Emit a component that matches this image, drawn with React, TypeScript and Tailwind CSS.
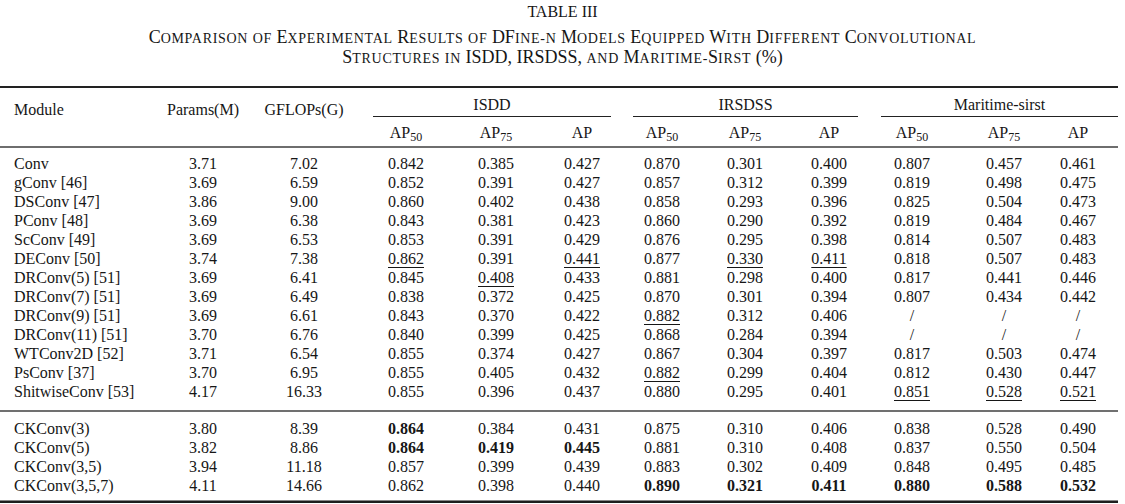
import React from "react";

type Cell = { v: string; b?: boolean; u?: boolean };

type Row = { name: string; cells: Cell[] };

const mk = (name: string, vals: string): Row => ({
  name,
  cells: vals.split(" ").map((t) => {
    if (t.startsWith("_")) return { v: t.slice(1), u: true };
    if (t.startsWith("*")) return { v: t.slice(1), b: true };
    return { v: t };
  }),
});

const baseRows: Row[] = [
  mk("Conv", "3.71 7.02 0.842 0.385 0.427 0.870 0.301 0.400 0.807 0.457 0.461"),
  mk("gConv [46]", "3.69 6.59 0.852 0.391 0.427 0.857 0.312 0.399 0.819 0.498 0.475"),
  mk("DSConv [47]", "3.86 9.00 0.860 0.402 0.438 0.858 0.293 0.396 0.825 0.504 0.473"),
  mk("PConv [48]", "3.69 6.38 0.843 0.381 0.423 0.860 0.290 0.392 0.819 0.484 0.467"),
  mk("ScConv [49]", "3.69 6.53 0.853 0.391 0.429 0.876 0.295 0.398 0.814 0.507 0.483"),
  mk("DEConv [50]", "3.74 7.38 _0.862 0.391 _0.441 0.877 _0.330 _0.411 0.818 0.507 0.483"),
  mk("DRConv(5) [51]", "3.69 6.41 0.845 _0.408 0.433 0.881 0.298 0.400 0.817 0.441 0.446"),
  mk("DRConv(7) [51]", "3.69 6.49 0.838 0.372 0.425 0.870 0.301 0.394 0.807 0.434 0.442"),
  mk("DRConv(9) [51]", "3.69 6.61 0.843 0.370 0.422 _0.882 0.312 0.406 / / /"),
  mk("DRConv(11) [51]", "3.70 6.76 0.840 0.399 0.425 0.868 0.284 0.394 / / /"),
  mk("WTConv2D [52]", "3.71 6.54 0.855 0.374 0.427 0.867 0.304 0.397 0.817 0.503 0.474"),
  mk("PsConv [37]", "3.70 6.95 0.855 0.405 0.432 _0.882 0.299 0.404 0.812 0.430 0.447"),
  mk("ShitwiseConv [53]", "4.17 16.33 0.855 0.396 0.437 0.880 0.295 0.401 _0.851 _0.528 _0.521"),
];

const ckRows: Row[] = [
  mk("CKConv(3)", "3.80 8.39 *0.864 0.384 0.431 0.875 0.310 0.406 0.838 0.528 0.490"),
  mk("CKConv(5)", "3.82 8.86 *0.864 *0.419 *0.445 0.881 0.310 0.408 0.837 0.550 0.504"),
  mk("CKConv(3,5)", "3.94 11.18 0.857 0.399 0.439 0.883 0.302 0.409 0.848 0.495 0.485"),
  mk("CKConv(3,5,7)", "4.11 14.66 0.862 0.398 0.440 *0.890 *0.321 *0.411 *0.880 *0.588 *0.532"),
];

const GRID =
  "grid grid-cols-[160px_86px_116px_88px_92px_80px_80px_86px_82px_84px_100px_64px]";

function DataRow({ row }: { row: Row }) {
  return (
    <div className={`${GRID} h-[19px] leading-[19px]`}>
      <div className="pl-[14px] whitespace-nowrap">{row.name}</div>
      {row.cells.map((cell, i) => (
        <div key={i} className={`text-center ${i === 10 ? "pr-[16px]" : ""}`}>
          <span
            className={`${cell.b ? "font-bold" : ""} ${
              cell.u ? "underline decoration-1 underline-offset-[3px]" : ""
            }`}
          >
            {cell.v}
          </span>
        </div>
      ))}
    </div>
  );
}

function AP({ sub }: { sub?: string }) {
  return (
    <span>
      AP
      {sub ? <sub className="text-[12px]">{sub}</sub> : null}
    </span>
  );
}

// Small caps: lowercase letters rendered as smaller uppercase
function SC({ text }: { text: string }) {
  const parts: { s: string; small: boolean }[] = [];
  for (const ch of text) {
    const small = /[a-z]/.test(ch) || (ch === "-" && parts.length > 0 && parts[parts.length - 1].small);
    const last = parts[parts.length - 1];
    if (last && last.small === small) last.s += ch;
    else parts.push({ s: ch, small });
  }
  return (
    <>
      {parts.map((p, i) =>
        p.small ? (
          <span key={i} className="text-[14px] uppercase tracking-[0.7px]">
            {p.s}
          </span>
        ) : (
          <span key={i}>{p.s}</span>
        )
      )}
    </>
  );
}

export default function App() {
  return (
    <div
      className="w-[1125px] h-[504px] bg-white text-[#161616] text-[16px] overflow-hidden"
      style={{ fontFamily: '"Liberation Serif", "Times New Roman", serif' }}
    >
      <div className="pt-[2px] text-center leading-[19px]">TABLE III</div>
      <div className="mt-[7px] text-center leading-[18px] text-[18px]">
        <div className="whitespace-nowrap">
          <SC text="Comparison of Experimental Results of DFine-n Models Equipped With Different Convolutional" />
        </div>
        <div className="whitespace-nowrap">
          <SC text="Structures in ISDD, IRSDSS, and Maritime-Sirst (%)" />
        </div>
      </div>

      <div className="w-[1118px] mt-[18px]">
        <div className="h-[2px] bg-[#222]" />
        <div className={`${GRID} grid-rows-[29px_29px]`}>
          <div className="row-span-2 pl-[14px] pt-[12px] leading-[19px]">Module</div>
          <div className="row-span-2 pt-[12px] leading-[19px] text-center">Params(M)</div>
          <div className="row-span-2 pt-[12px] leading-[19px] text-center">GFLOPs(G)</div>
          <div className="col-span-3 mx-[11px] pt-[7px] border-b border-[#222] text-center leading-[19px]">
            ISDD
          </div>
          <div className="col-span-3 ml-[11px] mr-[12px] pt-[7px] border-b border-[#222] text-center leading-[19px]">
            IRSDSS
          </div>
          <div className="col-span-3 ml-[11px] pt-[7px] border-b border-[#222] text-center leading-[19px]">
            Maritime-sirst
          </div>
          {["50", "75", "", "50", "75", "", "50", "75", ""].map((s, i) => (
            <div key={i} className={`pt-[6px] leading-[19px] text-center ${i === 8 ? "pr-[16px]" : ""}`}>
              <AP sub={s || undefined} />
            </div>
          ))}
        </div>
        <div className="h-[2px] bg-[#6e6e6e]" />
        <div className="pt-[6px] pb-[9px]">
          {baseRows.map((r) => (
            <DataRow key={r.name} row={r} />
          ))}
        </div>
        <div className="h-[2px] bg-[#707070]" />
        <div className="pt-[7px] pb-[5px]">
          {ckRows.map((r) => (
            <DataRow key={r.name} row={r} />
          ))}
        </div>
        <div className="h-[1px] bg-[#888]" />
        <div className="h-[2px] bg-[#1e1e1e]" />
      </div>
    </div>
  );
}
